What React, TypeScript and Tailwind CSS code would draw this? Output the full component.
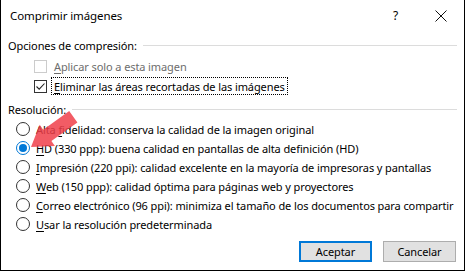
import React from 'react';

const font = { fontFamily: '"Noto Sans", "Liberation Sans", sans-serif', letterSpacing: '-0.1px' };

function Checkbox({ checked, disabled }: { checked?: boolean; disabled?: boolean }) {
  return (
    <span
      className={`flex h-[13px] w-[13px] shrink-0 items-center justify-center border bg-white ${
        disabled ? 'border-[#cccccc]' : 'border-[#333333]'
      }`}
    >
      {checked && (
        <svg width="11" height="11" viewBox="0 0 11 11">
          <path d="M1.5 5.5 L4.2 8.2 L9.5 2.5" fill="none" stroke="#222" strokeWidth="1.1" />
        </svg>
      )}
    </span>
  );
}

function Radio({ checked }: { checked?: boolean }) {
  return (
    <span
      className={`flex h-[14px] w-[14px] shrink-0 items-center justify-center rounded-full border bg-white ${
        checked ? 'border-[#0078d7]' : 'border-[#333333]'
      }`}
    >
      {checked && <span className="h-[8px] w-[8px] rounded-full bg-[#0078d7]" />}
    </span>
  );
}

function GroupHeader({ label, mt }: { label: string; mt: string }) {
  return (
    <div className={`flex h-[16px] items-center gap-[6px] pl-[7px] pr-[7px] ${mt}`}>
      <span className="whitespace-nowrap">{label}</span>
      <span className="h-px flex-1 bg-[#dcdcdc]" />
    </div>
  );
}

const radios: { pre: string; key: string; rest: string; checked?: boolean }[] = [
  { pre: 'Alta ', key: 'f', rest: 'idelidad: conserva la calidad de la imagen original' },
  { pre: '', key: 'H', rest: 'D (330 ppp): buena calidad en pantallas de alta definición (HD)', checked: true },
  { pre: '', key: 'I', rest: 'mpresión (220 ppi): calidad excelente en la mayoría de impresoras y pantallas' },
  { pre: '', key: 'W', rest: 'eb (150 ppp): calidad óptima para páginas web y proyectores' },
  { pre: '', key: 'C', rest: 'orreo electrónico (96 ppi): minimiza el tamaño de los documentos para compartir' },
  { pre: '', key: 'U', rest: 'sar la resolución predeterminada' },
];

export default function App() {
  return (
    <div
      className="relative flex h-[271px] w-[465px] flex-col overflow-hidden border-x border-b border-black bg-white text-[11px] leading-none text-black"
      style={font}
    >
      <div className="flex h-[30px] items-center pl-[9px] pt-[2px]">
        <span className="flex-1 text-[11.5px]">Comprimir imágenes</span>
        <span className="mr-[37px] text-[12px]">?</span>
        <svg width="12" height="12" viewBox="0 0 12 12" className="mr-[17px]">
          <path d="M0.5 0.5 L11.5 11.5 M11.5 0.5 L0.5 11.5" stroke="#111" strokeWidth="1" />
        </svg>
      </div>

      <GroupHeader label="Opciones de compresión:" mt="mt-[7px]" />

      <div className="mt-[6px] flex h-[14px] items-center gap-[7px] pl-[33px]">
        <Checkbox disabled />
        <span className="text-[#6d6d6d]">
          <span className="underline underline-offset-2">A</span>plicar solo a esta imagen
        </span>
      </div>
      <div className="mt-[4px] flex h-[18px] items-center gap-[4px] pl-[33px]">
        <Checkbox checked />
        <span className="flex h-[18px] items-center border border-dotted border-black px-[2px]">
          <span className="underline underline-offset-2">E</span>liminar las áreas recortadas de las imágenes
        </span>
      </div>

      <GroupHeader label="Resolución:" mt="mt-[6px]" />

      <div className="mt-[5px] flex flex-col gap-[5px] pl-[15px]">
        {radios.map((r) => (
          <div key={r.key} className="flex h-[14px] items-center gap-[6px] whitespace-nowrap">
            <Radio checked={r.checked} />
            <span>
              {r.pre}
              <span className="underline underline-offset-2">{r.key}</span>
              {r.rest}
            </span>
          </div>
        ))}
      </div>

      <div className="mt-auto mb-[8px] flex justify-end gap-[11px] pr-[8px]">
        <button className="h-[21px] w-[73px] border-2 border-[#0078d7] bg-[#e1e1e1]" style={font}>
          Aceptar
        </button>
        <button className="h-[21px] w-[73px] border border-[#adadad] bg-[#e1e1e1]" style={font}>
          Cancelar
        </button>
      </div>

      <svg className="pointer-events-none absolute left-0 top-0" width="465" height="271">
        <polygon
          points="30,147 38.7,124.8 42.2,129.7 68.2,111.1 76.4,122.5 50.4,141.1 53.9,146"
          fill="#f0404a"
          fillOpacity="0.85"
        />
      </svg>
    </div>
  );
}
